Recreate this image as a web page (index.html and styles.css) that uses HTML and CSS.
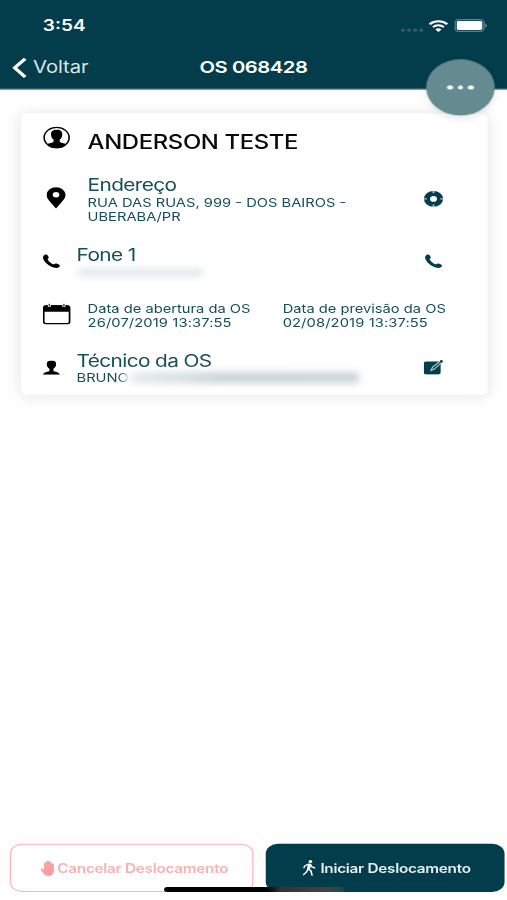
FILE: index.html
```html
<!DOCTYPE html>
<html lang="pt-BR">
<head>
<meta charset="utf-8">
<title>OS 068428</title>
<link rel="stylesheet" href="styles.css">
</head>
<body>
<div class="screen">
  <header class="top">
    <div class="status">
      <span class="time">3:54</span>
      <div class="signals">
        <svg class="dots" viewBox="0 0 19 4"><g fill="#355e6a"><circle cx="2" cy="2" r="1.7"/><circle cx="7" cy="2" r="1.7"/><circle cx="12" cy="2" r="1.7"/><circle cx="17" cy="2" r="1.7"/></g></svg>
        <svg class="wifi" viewBox="0 0 16 12"><g fill="none" stroke="#fff" stroke-width="2"><path d="M.8 4.2a10.2 10.2 0 0 1 14.4 0"/><path d="M3.5 7a6.4 6.4 0 0 1 9 0"/></g><path d="M8 11.8 5.5 9.3a3.6 3.6 0 0 1 5 0z" fill="#fff"/></svg>
        <svg class="battery" viewBox="0 0 27 13"><rect x=".6" y=".6" width="23.6" height="11.6" rx="3" fill="none" stroke="#5b7e87" stroke-width="1.2"/><rect x="2" y="2" width="20.8" height="8.8" rx="1.4" fill="#fff"/><path d="M25.2 4.3v4.2c1.7-.7 1.7-3.5 0-4.2z" fill="#6d8b93"/></svg>
      </div>
    </div>
    <nav class="nav">
      <a class="back"><svg viewBox="0 0 12 21"><path d="M10.6 1.4 2 10.5l8.6 9.1" fill="none" stroke="#fff" stroke-width="3"/></svg><span>Voltar</span></a>
      <h1>OS 068428</h1>
    </nav>
    <button class="more"><i></i><i></i><i></i></button>
  </header>

  <main>
    <section class="card">
      <div class="row customer">
        <svg class="icon avatar" viewBox="0 0 22 22"><circle cx="11" cy="11" r="10.2" fill="#fff" stroke="#000" stroke-width="1.3"/><path d="M11 3.2c-3.300 0-4.800 2-4.600 4.900.1 2.300.9 3.800 2.100 4.700v2.300c-.6 1-4 1.200-5.300 2.800C5 20.200 7.800 21.400 11 21.400s6-1.200 7.800-3.500c-1.300-1.600-4.700-1.800-5.300-2.800v-2.300c1.200-.9 2-2.400 2.100-4.700.2-2.900-1.300-4.900-4.600-4.900z"/></svg>
        <h2>ANDERSON TESTE</h2>
      </div>
      <div class="row address">
        <svg class="icon pin" viewBox="0 0 16 22"><path fill-rule="evenodd" d="M8 0a8 8 0 0 0-8 7.900C0 12.500 4 16 8 22c4-6 8-9.500 8-14.100A8 8 0 0 0 8 0zm0 5a2.800 2.800 0 1 1 0 5.600A2.800 2.800 0 0 1 8 5z"/></svg>
        <div class="info"><h3>Endereço</h3><p>RUA DAS RUAS, 999 - DOS BAIROS - UBERABA/PR</p></div>
        <svg class="action locate" viewBox="0 0 16 16"><circle cx="8" cy="8" r="5.300" fill="none" stroke="#033d4b" stroke-width="5"/><path d="M8 0v2.500M8 13.500v2.500M0 8h2.500M13.500 8h2.500" stroke="#b5c8cc" stroke-width="1.400"/></svg>
      </div>
      <div class="row phone">
        <svg class="icon handset" viewBox="0 0 14 14"><path d="M1.300.8C2.200-.1 3.200.1 3.800 1l.9 1.800c.3.900-.1 1.400-.9 2 .4 2 3.200 4.900 5.400 5.400.6-.8 1.200-1.200 2-.8l1.900 1c.9.600 1.100 1.400.2 2.400-1.200 1.400-3.800 1.400-7-.7C3.200 10 .5 6.500.2 4.100 0 2.600.4 1.500 1.300.8z"/></svg>
        <div class="info"><h3>Fone 1</h3><div class="redacted number"></div></div>
        <svg class="action call" viewBox="0 0 14 14"><path d="M1.300.8C2.200-.1 3.200.1 3.800 1l.9 1.800c.3.900-.1 1.400-.9 2 .4 2 3.200 4.900 5.400 5.400.6-.8 1.200-1.200 2-.8l1.900 1c.9.600 1.100 1.400.2 2.400-1.200 1.400-3.800 1.400-7-.7C3.200 10 .5 6.500.2 4.100 0 2.600.4 1.500 1.300.8z"/></svg>
      </div>
      <div class="row dates">
        <svg class="icon calendar" viewBox="0 0 22.500 21"><rect x=".7" y="2.700" width="21.100" height="17.600" rx="2" fill="#fff" stroke="#000" stroke-width="1.400"/><path d="M.7 8.300V3.500c0-1 .7-1.700 1.700-1.700h17.700c1 0 1.700.7 1.700 1.700v4.800z"/><path d="M5.300 0v3.600M17.200 0v3.600" stroke="#fff" stroke-width="2.400"/><path d="M5.300 .3v2.800M17.200 .3v2.800" stroke="#444" stroke-width="1.200"/></svg>
        <div class="date opened"><p>Data de abertura da OS</p><p class="stamp">26/07/2019 13:37:55</p></div>
        <div class="date due"><p>Data de previsão da OS</p><p class="stamp">02/08/2019 13:37:55</p></div>
      </div>
      <div class="row technician">
        <svg class="icon person" viewBox="0 0 14 14"><path d="M7 0C4.200 0 3 1.500 3.200 4c.1 2 1 3.300 2.200 4v2.200C5 11.500.3 11.200.2 14h13.600c-.1-2.800-4.800-2.500-5.200-3.800V8c1.200-.7 2.100-2 2.200-4C11 1.500 9.800 0 7 0z"/></svg>
        <div class="info"><h3>Técnico da OS</h3><div class="name"><span>BRUNO</span><div class="redacted surname"></div></div></div>
        <svg class="action edit" viewBox="0 0 16 15"><rect x="0" y="2" width="13.800" height="12.800" rx="2" fill="#033d4b"/><path d="M6 10.800 7.200 7.500 14 1.200l1.200 1.200-6.600 7z" fill="#033d4b" stroke="#b9c9cd" stroke-width="1"/><path d="m13 1.400 1.500-1.300L16 1.600l-1.700 1.500z" fill="#033d4b"/></svg>
      </div>
    </section>
  </main>

  <footer class="actions">
    <button class="btn cancel"><svg class="hand" viewBox="0 0 12 15"><path d="M3 8V2.400c0-1 1.400-1 1.500 0V1.200c0-1.200 1.600-1.200 1.700 0v-.1c.1-1.200 1.700-1.100 1.700.1v1c.1-1 1.600-1 1.600.1v1.300c.2-.8 1.500-.8 1.500.3V10c0 3-1.500 5-4.300 5-2.300 0-3.300-1.200-4.100-2.500L.2 9C-.3 7.900 1 7.200 1.800 8L3 9.300z" fill="#fa9d9d"/><path d="M4.600 2.600v4M6.200 2v4.500M7.900 2.500v4M9.500 3.500v3" stroke="#fbb9b9" stroke-width=".4"/></svg><span>Cancelar Deslocamento</span></button>
    <button class="btn start"><svg class="walk" viewBox="0 0 11 16"><circle cx="6.500" cy="1.600" r="1.500" fill="#fff"/><path d="M1.200 7.800 2 5.900l3-1.600 1.500.2.900 2.300 2.500 1.300M5.400 4.500 4.400 9l2.500 2 .9 4.200M4.300 9.300 3.400 12 .9 14.700" fill="none" stroke="#fff" stroke-width="1.300" stroke-linecap="round" stroke-linejoin="round"/><path d="M4.500 4.200h2.400l-.6 4.600-2.400.3z" fill="#fff"/></svg><span>Iniciar Deslocamento</span></button>
    <div class="home"></div>
  </footer>
</div>
</body>
</html>
```
FILE: styles.css
```css
* { box-sizing: border-box; }
html, body { margin: 0; height: 900px; overflow: hidden; background: #fefefe; }
h1, h2, h3, p { margin: 0; font-weight: 400; }
button { font: inherit; border: 0; margin: 0; padding: 0; }
svg { display: block; flex: none; }

/* 414 x 896 point canvas, stretched to the window */
.screen {
  width: 414px;
  height: 896px;
  display: flex;
  flex-direction: column;
  transform: scale(1.22464, 1.00446);
  transform-origin: 0 0;
  font-family: Inter, "Liberation Sans", sans-serif;
  color: #164e5b;
}

.top { position: relative; height: 88.5px; flex: none; background: #033d4b; border-bottom: 1px solid #54777f; color: #fff; }
.status { height: 44px; padding: 7px 16.5px 0 35px; display: flex; justify-content: space-between; align-items: center; }
.time { font-size: 15.5px; font-weight: 600; }
.signals { display: flex; align-items: center; }
.dots { width: 19px; height: 4px; margin: 8px 4px 0 0; }
.wifi { width: 16px; height: 12px; margin-right: 5px; }
.battery { width: 27px; height: 13px; }
.nav { height: 46px; display: grid; grid-template-columns: 1fr auto 1fr; align-items: center; }
.back { display: flex; align-items: center; gap: 5px; padding-left: 10px; font-size: 16.5px; letter-spacing: -.05px; color: #dce6e9; }
.back svg { width: 12px; height: 21px; }
.nav h1 { font-size: 16.5px; font-weight: 600; letter-spacing: -.35px; }
.more {
  position: absolute; left: 348px; top: 59px; width: 56px; height: 56px; border-radius: 50%;
  background: #648b90; box-shadow: 0 3px 8px rgba(0,0,0,.1);
  display: flex; justify-content: center; align-items: center; gap: 4px;
}
.more i { width: 4.5px; height: 4.5px; border-radius: 50%; background: #fff; }

main { flex: 1; padding: 24px 15.8px 0 17px; }
.card { height: 280.3px; padding: 0 0 0 18px; border-radius: 5px; background: #fff; box-shadow: 0 1px 12px rgba(0,0,0,.1); }
.row { display: flex; align-items: flex-start; }
.customer { height: 55.5px; }
.address { height: 70.2px; }
.phone { height: 55.6px; }
.dates { height: 48.8px; }
.technician { height: 50px; }
.row h2 { font-size: 19.5px; line-height: 57.5px; font-weight: 500; letter-spacing: -.3px; color: #0a0a0a; white-space: nowrap; }
.info { width: 274.5px; padding-top: 6.3px; }
.phone .info, .technician .info { width: 283.5px; }
.info h3 { font-size: 17px; line-height: 20px; margin-bottom: .5px; letter-spacing: -.5px; }
.info p, .date p, .name { font-size: 12px; line-height: 14px; }
.info p { width: 230px; }
.avatar { width: 22.5px; height: 22px; margin: 13.5px 14px 0 0; }
.pin { width: 15.5px; height: 22px; margin: 18px 17.7px 0 3.3px; }
.handset { width: 14px; height: 14px; margin: 15.3px 13.5px 0 0; }
.calendar { width: 22.5px; height: 21px; margin: 8.5px 14px 0 0; }
.person { width: 14px; height: 14px; margin: 16.4px 13.5px 0 0; }
.action { fill: #033d4b; }
.locate { width: 16px; height: 16px; margin-top: 22px; }
.call { width: 14px; height: 14px; margin: 15.3px 0 0 1px; }
.edit { width: 16px; height: 15px; margin-top: 15.5px; }
.date { padding-top: 6.9px; white-space: nowrap; }
.opened { width: 159.3px; }
.stamp { letter-spacing: .1px; }
.redacted { background: #e4ebec; filter: blur(3px); }
.number { width: 101px; height: 9px; margin: 3px 0 0 1px; }
.name { display: flex; }
.name span { width: 42px; }
.surname { width: 192px; height: 12px; margin: 1px 0 0 -4px; background: linear-gradient(90deg, #fff 1%, #e5ecee 5%, #dbe4e6 20%, #cbd7da 42%, #ced9dc); }

.actions { position: relative; height: 56px; padding: 0 2.3px 8px 8.4px; display: flex; gap: 10px; }
.btn { flex: 1; height: 48px; border-radius: 10px; display: flex; justify-content: center; align-items: center; font-size: 12.5px; font-weight: 600; letter-spacing: -.22px; white-space: nowrap; }
.cancel { border: 1.2px solid #fbb5b5; background: #fefefe; color: #f9b1b1; padding-left: 4px; }
.start { background: #033d4b; color: #e8eff1; padding-left: 2.5px; }
.hand { width: 12px; height: 15px; margin-right: 2px; }
.walk { width: 11px; height: 16px; margin-right: 4px; }
.home { position: absolute; left: 134px; top: 43px; width: 147px; height: 5px; border-radius: 3px; background: linear-gradient(90deg, #000 57%, #343434 65%, #454142 90%, #24454e); }
```
